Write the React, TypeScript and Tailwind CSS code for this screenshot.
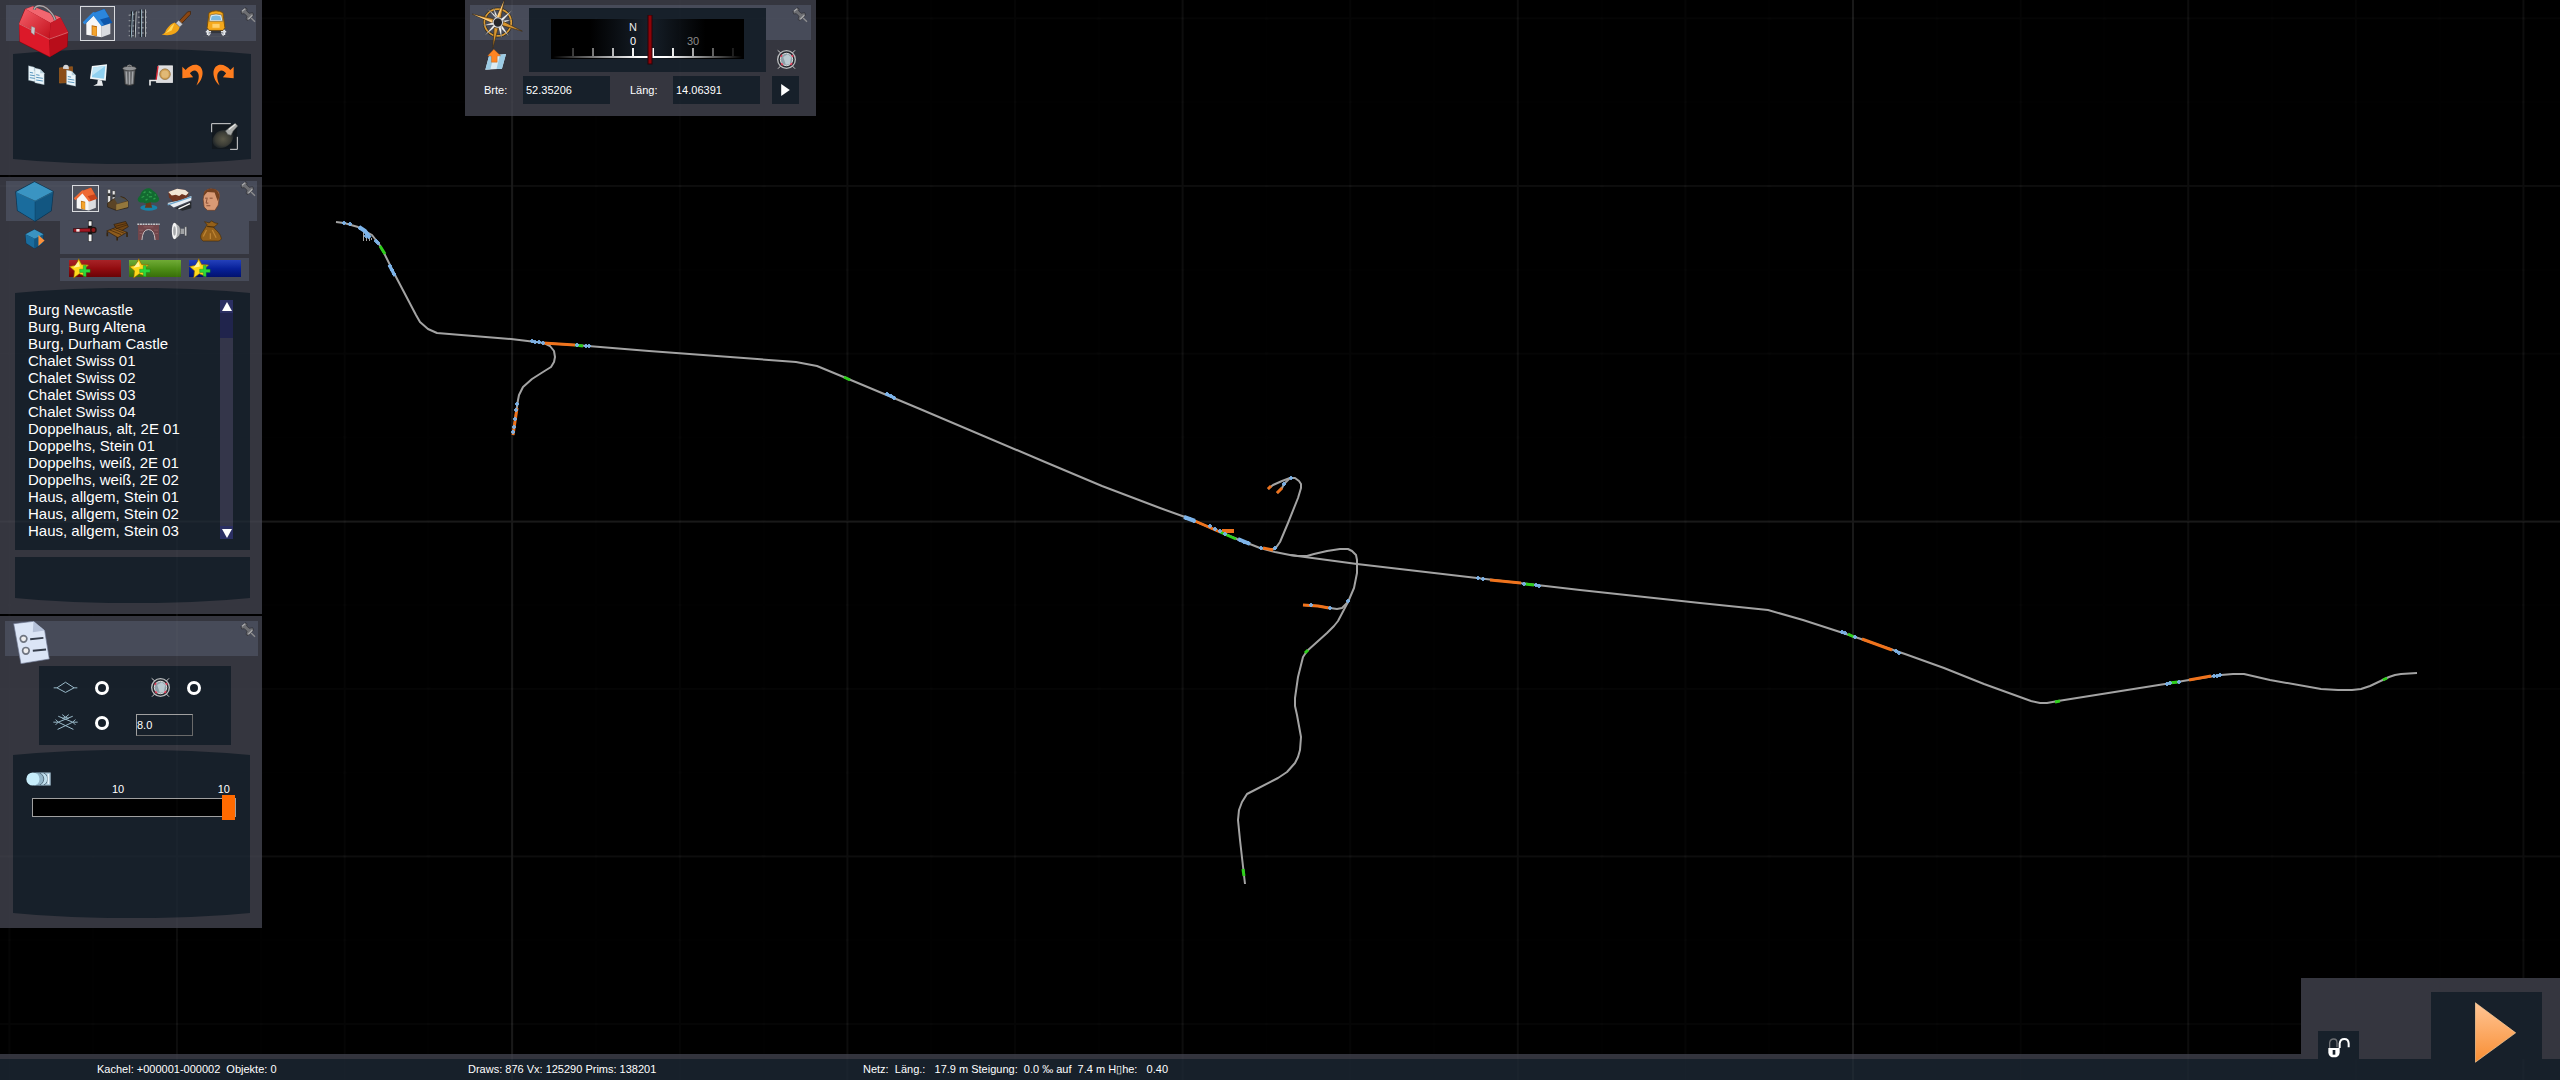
import type { ReactNode } from "react"

const GREY = "#a3a3a3"
const BLUE = "#7db4ea"
const ORANGE = "#f0731c"
const GREEN = "#2fd01c"

const objects = [
  "Burg Newcastle",
  "Burg, Burg Altena",
  "Burg, Durham Castle",
  "Chalet Swiss 01",
  "Chalet Swiss 02",
  "Chalet Swiss 03",
  "Chalet Swiss 04",
  "Doppelhaus, alt, 2E 01",
  "Doppelhs, Stein 01",
  "Doppelhs, weiß, 2E 01",
  "Doppelhs, weiß, 2E 02",
  "Haus, allgem, Stein 01",
  "Haus, allgem, Stein 02",
  "Haus, allgem, Stein 03",
]

const tracks = [
  // main line, west to east
  "336,222 344,223 358,227 372,235 379,244 384,253 395,275 416,315 420,322 428,329 437,333 511,339 544,343 588,346 649,351 796,362 817,366 846,378 920,409 1045,462 1102,486 1160,508 1185,517 1237,539 1260,548 1275,552 1290,555 1357,564 1477,578 1580,590 1700,603 1768,610 1803,620 1840,632 1861,639 1905,654 1944,668 1984,684 2031,701 2040,703 2047,703 2058,701 2165,684 2189,680 2221,675 2233,674 2244,674 2270,680 2321,689 2338,690 2352,690 2361,689 2370,686 2389,677 2395,675 2401,674 2417,673",
  "544,343 550,346 554,351 555,357 554,362 551,367 543,372 532,379 523,387 519,395 518,400 517,407 513,435",
  "1265,549 1275,549 1280,542 1288,523 1298,498 1301,488 1301,484 1299,481 1295,478 1290,478 1282,481 1273,485 1268,489",
  "1290,478 1284,484 1282,488 1277,493",
  "1290,555 1298,556 1307,556 1314,554 1327,551 1340,549 1348,549 1352,551 1356,555 1357,560 1357,573 1354,588 1348,602 1338,621 1334,626 1327,633 1307,651 1303,657 1298,677 1295,698 1295,706 1297,715 1301,737 1300,750 1298,757 1295,763 1287,772 1278,778 1247,794 1242,802 1239,810 1238,820 1240,840 1245,884",
  "1348,602 1342,608 1337,609 1330,608 1318,606 1303,605",
]

const sections: [string, string, number][] = [
  ["380,246 385,254", GREEN, 3],
  ["359,227 365,231 370,238", BLUE, 4],
  ["389,265 395,276", BLUE, 3],
  ["543,343 575,345", ORANGE, 3],
  ["575,345 583,346", GREEN, 3],
  ["517,408 513,435", ORANGE, 3],
  ["844,377 850,380", GREEN, 3],
  ["886,394 895,398", BLUE, 3],
  ["1184,517 1195,521", BLUE, 4],
  ["1195,521 1220,532", ORANGE, 3],
  ["1222,531 1234,531", ORANGE, 4],
  ["1220,532 1236,539", GREEN, 3],
  ["1238,539 1250,544", BLUE, 4],
  ["1263,548 1273,550", ORANGE, 3],
  ["1268,489 1271,486", ORANGE, 3],
  ["1277,493 1282,488", ORANGE, 3],
  ["1303,605 1318,606 1329,608", ORANGE, 3],
  ["1305,653 1308,650", GREEN, 3],
  ["1243,869 1244,876", GREEN, 3],
  ["1490,580 1521,583", ORANGE, 3],
  ["1525,584 1534,585", GREEN, 3],
  ["1848,634 1854,637", GREEN, 3],
  ["1862,639 1892,650", ORANGE, 3],
  ["2055,702 2060,701", GREEN, 3],
  ["2169,683 2178,682", GREEN, 3],
  ["2189,680 2211,676", ORANGE, 3],
  ["2383,680 2387,678", GREEN, 3],
]

const switches: [number, number][] = [
  [344, 223], [350, 224], [360, 228], [366, 236], [376, 241], [378, 243], [390, 266], [392, 270], [394, 274],
  [532, 341], [535, 342], [539, 342], [543, 343], [577, 345], [586, 346], [589, 346],
  [517, 404], [516, 410], [515, 419], [514, 427], [513, 432],
  [887, 394], [891, 396], [894, 398], [1186, 518], [1190, 519], [1194, 521], [1210, 526], [1215, 529],
  [1220, 531], [1225, 534], [1240, 540], [1244, 542], [1248, 543], [1261, 548], [1275, 548],
  [1291, 478], [1284, 484], [1348, 601], [1330, 608], [1311, 605],
  [1478, 578], [1483, 579], [1524, 584], [1536, 585], [1539, 586],
  [1842, 632], [1845, 633], [1855, 637], [1896, 651], [1899, 653],
  [2167, 684], [2170, 683], [2179, 682], [2214, 676], [2217, 676], [2220, 675],
]

const GridLayer = ({ id, className = "" }: { id: string; className?: string }) => (
  <svg className={`pointer-events-none absolute inset-0 h-full w-full ${className}`} aria-hidden="true">
    <defs>
      <pattern id={id} x="176" y="185" width="335.2" height="335.2" patternUnits="userSpaceOnUse">
        <g fill="#ffffff">
          <path d="M0 0h2v335.2h-2zM0 0h335.2v2h-335.2z" opacity=".055" />
          <path d="M167.6 0h2v335.2h-2zM0 167.6h335.2v2h-335.2z" opacity=".022" />
          <path d="M83.8 0h2v335.2h-2zM251.4 0h2v335.2h-2zM0 83.8h335.2v2h-335.2zM0 251.4h335.2v2h-335.2z" opacity=".009" />
        </g>
      </pattern>
      {/* every fourth line is stronger */}
      <pattern id={`${id}-tile`} x="511" y="521" width="1341" height="1341" patternUnits="userSpaceOnUse">
        <path d="M0 0h2v1341h-2zM0 0h1341v2h-1341z" fill="#ffffff" opacity=".05" />
      </pattern>
    </defs>
    <rect width="100%" height="100%" fill={`url(#${id})`} />
    <rect width="100%" height="100%" fill={`url(#${id}-tile)`} />
  </svg>
)

const RouteMap = () => (
  <svg className="absolute inset-0 h-full w-full" aria-label="Strecke" role="img">
    <g fill="none" strokeLinejoin="round">
      {tracks.map((points) => (
        <polyline key={points} points={points} stroke={GREY} strokeWidth="2" />
      ))}
      <path d="M363.5 231v10M366.5 234v7M369.5 236v5M371.5 238v2" stroke={GREY} strokeWidth="1" />
      {sections.map(([points, color, width]) => (
        <polyline key={points} points={points} stroke={color} strokeWidth={width} />
      ))}
    </g>
    {switches.map(([x, y]) => (
      <path key={`${x}-${y}`} d={`M${x - 2} ${y}h4M${x} ${y - 2}v4`} stroke={BLUE} strokeWidth="2" opacity=".9" />
    ))}
  </svg>
)

type IconProps = { box: string; className: string; children: ReactNode }

const Icon = ({ box, className, children }: IconProps) => (
  <svg viewBox={box} className={`block shrink-0 ${className}`} aria-hidden="true">{children}</svg>
)

const IconButton = ({ label, className = "", children }: { label: string; className?: string; children: ReactNode }) => (
  <button type="button" aria-label={label} className={`flex items-center justify-center ${className}`}>{children}</button>
)

const Pin = () => (
  <IconButton label="Anheften" className="h-4 w-4">
    <Icon box="0 0 48 48" className="h-4 w-4">
      <path d="M28 28l17 16" stroke="#8d8d8f" strokeWidth="4" />
      <path d="M3 14L15 2l6 3-1 7 8 7 10-2 3 7-17 17-6-4 3-9-8-8-8 1z" fill="#6d6e72" stroke="#2a2b30" strokeWidth="2" />
      <path d="M6 13l9-8M25 37l12-12" stroke="#a9a9ab" strokeWidth="4" />
    </Icon>
  </IconButton>
)

const Toolbox = () => (
  <Icon box="0 0 156 160" className="h-[53px] w-[52px]">
    <defs>
      <linearGradient id="red" x2="1" y2="1"><stop stopColor="#f5606a" /><stop offset="1" stopColor="#c3101c" /></linearGradient>
    </defs>
    <path d="M3 54L20 12 44 4l84 34 23 44-2 44-54 32L4 112z" fill="#8f0610" />
    <path d="M22 12L44 4l84 34-30 16z" fill="#f26670" />
    <path d="M22 12l76 42-4 48L3 56z" fill="url(#red)" />
    <path d="M3 58l91 46 2 52L5 110z" fill="#dc1929" />
    <path d="M98 54l30-16 23 44-57 20z" fill="#c91a28" />
    <path d="M96 104l54-20-3 42-51 30z" fill="#b80d1a" />
    <path d="M3 57l91 46 56-20" fill="none" stroke="#f98a8f" strokeWidth="2" />
    <path d="M40 64l11 5-2 22-10-8z" fill="#c5c5c9" stroke="#666" />
    <path d="M48 14C52-2 74 0 86 10s22 20 26 36" fill="none" stroke="#5b4347" strokeWidth="8" />
    <path d="M48 14C52-2 74 0 86 10s22 20 26 36" fill="none" stroke="#a6aaae" strokeWidth="4" />
  </Icon>
)

const House = ({ roof, shade, className }: { roof: string; shade: string; className: string }) => (
  <Icon box="0 0 90 90" className={className}>
    <path d="M10 44L32 22l24 28v38l-46-8z" fill="#f6f6f6" />
    <path d="M56 50l26-6v34l-26 10z" fill="#dadce0" />
    <path d="M26 52l16 3v30l-16-4z" fill="#b5660c" />
    <path d="M28 55l13 3v26l-13-4z" fill="#f3a32c" />
    <path d="M32 14L64 2l24 42-30 10z" fill={shade} />
    <path d="M34 14L64 3l14 24-32 9z" fill={roof} />
    <path d="M2 46L32 17l27 35" fill="none" stroke={roof} strokeWidth="9" strokeLinejoin="round" />
  </Icon>
)

const Rails = () => (
  <Icon box="0 0 58 86" className="h-[29px] w-[19px]">
    <path d="M2 18l20-4M2 34h20M2 50h20M2 66h20M2 80h20M30 8h27M30 24h27M30 40h27M30 56h27M30 72h27" stroke="#8b8f95" strokeWidth="4" />
    <path d="M12 6L9 86M23 4l-2 82M39 0v84M51 0v84" stroke="#12171d" strokeWidth="6" />
    <path d="M14 6l-4 80M41 0v84" stroke="#9fb9c6" strokeWidth="3" />
    <path d="M25 6l-3 80M53 0v84" stroke="#c9cdd1" strokeWidth="3" />
  </Icon>
)

const Brush = () => (
  <Icon box="0 0 90 74" className="h-[25px] w-[30px]">
    <path d="M50 34L80 2l9-1-1 9-30 31z" fill="#8a4612" stroke="#3c2008" strokeWidth="2" />
    <path d="M44 36l9-9 12 12-9 9z" fill="#c6c9ce" stroke="#55585e" strokeWidth="2" />
    <path d="M41 34l15 14c-5 20-28 28-54 22 13-3 10-12 17-19 6-7 12-14 22-17z" fill="#f2a516" />
    <path d="M40 38C28 44 24 60 10 68l22-10z" fill="#ffd75a" />
  </Icon>
)

const Train = () => (
  <Icon box="0 0 78 82" className="h-[27px] w-[26px]">
    <path d="M0 80h78" stroke="#55585f" strokeWidth="2" />
    <path d="M18 8Q39-3 60 8l6 46-6 8H18l-6-8z" fill="#f5a81b" stroke="#7b4e06" strokeWidth="3" />
    <path d="M22 15q17-6 34 0l4 19H18z" fill="#dff0f8" stroke="#76592a" strokeWidth="2" />
    <path d="M26 19q13-4 26 0l3 11H23z" fill="#7cb9df" />
    <path d="M28 42h22v12H28z" fill="#ffd06b" />
    <path d="M16 63h46v7H16z" fill="#33353b" />
    <path d="M14 60v16M64 60v16" stroke="#e9ecef" strokeWidth="6" />
    <path d="M8 66h16M54 66h16M22 70l-6 8M56 70l6 8" stroke="#dcdfe3" strokeWidth="4" />
  </Icon>
)

const Page = ({ x, y }: { x: number; y: number }) => (
  <g transform={`translate(${x} ${y})`}>
    <path d="M0 2l16 4 12 12v34L0 46z" fill="#eaf5fa" stroke="#7e97a5" strokeWidth="1" />
    <path d="M16 6v12h12z" fill="#b6cfdb" />
    <path d="M4 22l10 2M4 30l20 3M4 38l20 3" stroke="#5a97be" strokeWidth="3" />
  </g>
)

const editTools = [
  { label: "Kopieren", icon: <Icon box="0 0 50 60" className="h-5 w-[17px]"><Page x={1} y={0} /><Page x={20} y={7} /></Icon> },
  { label: "Einfügen", icon: (
    <Icon box="0 0 52 70" className="h-[23px] w-[17px]">
      <path d="M1 12l40-4v48l-40 2z" fill="#8b4d18" stroke="#a9651f" strokeWidth="2" />
      <path d="M12 14Q12 2 21 2t9 10v4z" fill="#d4d4d6" />
      <Page x={23} y={16} />
    </Icon>) },
  { label: "Ansicht", icon: (
    <Icon box="0 0 56 70" className="h-[23px] w-[19px]">
      <path d="M26 48l12 2 4 16H12l12-6z" fill="#e8eaec" />
      <path d="M8 6L54 1l-4 50-48-6z" fill="#f0f6f9" />
      <path d="M12 11l37-5-4 39-37-5z" fill="#8fd0f0" />
      <path d="M12 11l37-5-39 28z" fill="#c0e6f7" />
    </Icon>) },
  { label: "Löschen", icon: (
    <Icon box="0 0 46 66" className="h-[22px] w-[15px]">
      <path d="M5 16h36l-4 46q-14 6-28 0z" fill="#66686b" stroke="#222" strokeWidth="2" />
      <path d="M13 22l2 38M23 22v40M33 22l-2 38" stroke="#a3a5a8" strokeWidth="4" />
      <ellipse cx="23" cy="13" rx="21" ry="7" fill="#919396" stroke="#333" strokeWidth="2" />
      <path d="M16 7q7-8 14 0" fill="none" stroke="#888" strokeWidth="4" />
    </Icon>) },
  { label: "Messen", icon: (
    <Icon box="0 0 72 62" className="h-[21px] w-6">
      <path d="M28 2h43v50H22z" fill="#dcdcde" stroke="#f7f7f7" strokeWidth="2" />
      <path d="M27 3l-6 44" stroke="#d6202f" strokeWidth="4" />
      <circle cx="48" cy="27" r="16" fill="#d2a052" stroke="#8a6a3a" strokeWidth="2" />
      <circle cx="48" cy="27" r="11" fill="#e1b976" />
      <path d="M26 46H3v15" fill="none" stroke="#e6e6e6" strokeWidth="5" />
    </Icon>) },
  { label: "Rückgängig", icon: (
    <Icon box="0 0 64 66" className="h-[22px] w-[21px]">
      <path d="M1 8l10 10C24 2 44-4 56 8c14 16 4 44-12 57 8-18 10-34 2-42-7-7-15-3-22 5l10 12-33 3z" fill="#ff7d1e" />
    </Icon>) },
  { label: "Wiederholen", icon: (
    <Icon box="0 0 64 66" className="h-[22px] w-[21px]">
      <path d="M63 8L53 18C40 2 20-4 8 8c-14 16-4 44 12 57-8-18-10-34-2-42 7-7 15-3 22 5L30 40l33 3z" fill="#ff7d1e" />
    </Icon>) },
]

const Torch = () => (
  <Icon box="0 0 82 82" className="h-[27px] w-[27px]">
    <defs>
      <radialGradient id="glow"><stop stopColor="#5a5848" /><stop offset=".7" stopColor="#3c3d36" /><stop offset="1" stopColor="#23282a" /></radialGradient>
    </defs>
    <rect x="3" y="3" width="76" height="76" fill="#0f1418" opacity=".6" />
    <path d="M48 22c-20-4-36 8-42 24-6 22 16 36 36 28 18-8 26-20 26-38z" fill="url(#glow)" />
    <path d="M44 24l12-10L74 1l7 8-14 16-6 12-10-2z" fill="#a9aba9" stroke="#5d605f" strokeWidth="2" />
    <path d="M54 20l20-16" stroke="#e6e7e6" strokeWidth="4" />
    <path d="M2 28V2h58M80 42v38H58" fill="none" stroke="#d8d8d8" strokeWidth="3" />
  </Icon>
)

const Cube = ({ className }: { className: string }) => (
  <Icon box="0 0 118 124" className={className}>
    <path d="M59 1l58 30-6 60-50 32L6 90 1 32z" fill="#0a3350" />
    <path d="M59 3l56 29-54 28L3 33z" fill="#3a94c2" />
    <path d="M3 34l57 27v60L8 89z" fill="#1a6c9d" />
    <path d="M115 34L61 61v60l48-31z" fill="#125681" />
    <path d="M4 34l57 27 53-27" fill="none" stroke="#5aaad0" strokeWidth="1" />
  </Icon>
)

const categories = [
  { label: "Industrie", icon: (
    <Icon box="0 0 68 70" className="h-[23px] w-[23px]">
      <path d="M4 4h9v44H4zM18 8h9v34h-9z" fill="#e8e8e8" stroke="#333" strokeWidth="2" />
      <path d="M4 16h9v8H4zM18 20h9v8h-9z" fill="#333" />
      <path d="M4 46l20-14 14 2 6-8 12 4 10 10v20l-36 8L4 58z" fill="#5b4426" stroke="#2b1e0e" strokeWidth="2" />
      <path d="M30 50l36-10v18l-36 10z" fill="#94773c" />
      <path d="M24 32l16-6 24 12-30 10z" fill="#4b4f54" />
    </Icon>) },
  { label: "Vegetation", icon: (
    <Icon box="0 0 70 70" className="h-[23px] w-[23px]">
      <ellipse cx="36" cy="60" rx="26" ry="9" fill="#1782a8" />
      <path d="M31 34h9l6 26H24z" fill="#643a18" />
      <path d="M34 1c10 0 12 6 18 10s10 8 12 16c6 6 4 14-4 16-8 4-14-2-22 1s-14 4-18 0c-10 2-18-2-18-10 2-6 4-8 8-12C12 12 22 2 34 1z" fill="#126a30" />
      <path d="M20 15l6-4M36 11l8 5M14 29l8-4M36 27l10-1M50 34l6-3M26 37l6-3M30 20l4 2M54 20l3 3" stroke="#2f9c4c" strokeWidth="4" />
    </Icon>) },
  { label: "Gelände", icon: (
    <Icon box="0 0 74 68" className="h-[23px] w-[25px]">
      <path d="M4 12L30 2l24 4 10 8-6 20-40 6L6 28z" fill="#6f3521" />
      <path d="M4 12L30 2l24 4 10 8-8 8-12-4-8 6-10-4-12 2z" fill="#f1e6d6" />
      <path d="M1 44l40-8 31-12v12L20 58z" fill="#e8edf2" />
      <path d="M2 50l70-24" stroke="#6aa3c9" strokeWidth="4" />
      <path d="M24 60l48-20v20l-26 7z" fill="#25282c" />
      <path d="M34 62l34-16" stroke="#f4f4f4" strokeWidth="4" />
    </Icon>) },
  { label: "Figuren", icon: (
    <Icon box="0 0 54 70" className="h-[23px] w-[18px]">
      <path d="M8 10Q20-2 38 4t14 24l-3 24-10 16H16L6 58 3 34z" fill="#d99a75" stroke="#6e3c22" strokeWidth="2" />
      <path d="M5 24Q5 2 28 2q24-1 24 26l-4 12-5-12-5-14-22-2z" fill="#74401f" />
      <path d="M9 31h8M23 31h9M15 33l-3 13h7M13 54h12" fill="none" stroke="#8a4f36" strokeWidth="3" />
    </Icon>) },
  { label: "Signale", icon: (
    <Icon box="0 0 76 66" className="h-[22px] w-[25px]">
      <path d="M52 1v64" stroke="#111" strokeWidth="13" />
      <path d="M52 3v14M52 44v20" stroke="#f3f3f3" strokeWidth="9" />
      <path d="M1 26l64-2v12H1z" fill="#a21722" stroke="#2c0b0e" strokeWidth="2" />
      <path d="M10 27h10v8H10z" fill="#f1e9e9" />
      <circle cx="62" cy="30" r="10" fill="#23130f" />
      <circle cx="62" cy="30" r="6" fill="#8e1719" />
    </Icon>) },
  { label: "Ausstattung", icon: (
    <Icon box="0 0 70 60" className="h-5 w-[23px]">
      <path d="M24 10L60 1l8 16-30 18z" fill="#704515" stroke="#2f1b06" strokeWidth="2" />
      <path d="M2 30l26-10 36 14-28 16z" fill="#8d5b1c" stroke="#2f1b06" strokeWidth="2" />
      <path d="M12 27l34 14M20 23l36 14M27 16l36-9M30 23l36-12" stroke="#382007" strokeWidth="2" />
      <path d="M4 34v12M34 48v11M64 34v14" stroke="#37250f" strokeWidth="5" />
    </Icon>) },
  { label: "Brücken", icon: (
    <Icon box="0 0 70 56" className="h-[19px] w-[23px]">
      <path d="M3 8h64v46H55Q52 22 35 22T14 54H3z" fill="#71464b" />
      <path d="M6 24h12M8 34h8M52 24h12M56 34h8M20 14h30" stroke="#8b5d62" strokeWidth="3" />
      <path d="M15 54Q17 22 35 22t20 32" fill="none" stroke="#c9c0c0" strokeWidth="3" />
      <path d="M1 6h68" stroke="#c9c9cb" strokeWidth="5" strokeDasharray="6 2" />
    </Icon>) },
  { label: "Geräusche", icon: (
    <Icon box="0 0 50 54" className="h-[18px] w-[17px]">
      <path d="M24 20h20v16H24z" fill="#9fa1a4" />
      <path d="M40 14h7v28h-7z" fill="#c3c4c7" stroke="#404247" strokeWidth="2" />
      <path d="M10 2c16 8 18 14 18 26S22 46 10 52z" fill="#aeb0b3" stroke="#44474b" strokeWidth="2" />
      <ellipse cx="10" cy="27" rx="8" ry="25" fill="#f3f3f3" />
      <ellipse cx="10" cy="27" rx="4" ry="14" fill="#a7a9ac" />
    </Icon>) },
  { label: "Fracht", icon: (
    <Icon box="0 0 68 66" className="h-[22px] w-[22px]">
      <path d="M22 14L14 4l14 4 8-6 10 6 10 2-14 12c10 10 22 20 24 34-4 10-12 8-20 8H10C0 58 0 46 8 36c4-8 10-14 14-22z" fill="#94601a" stroke="#462c08" strokeWidth="2" />
      <path d="M22 19l22 2" stroke="#4f320c" strokeWidth="4" />
      <path d="M20 30L10 50M38 30l12 24M32 40v18" stroke="#bd8433" strokeWidth="4" />
    </Icon>) },
]

const swatches = [
  { label: "Favoriten rot", bar: "from-[#a82227] via-[#930c10] to-[#6a0306]" },
  { label: "Favoriten grün", bar: "from-[#70ab35] via-[#4f8f17] to-[#386f09]" },
  { label: "Favoriten blau", bar: "from-[#2440bb] via-[#08219a] to-[#02126f]" },
]

const Star = () => (
  <Icon box="0 0 66 64" className="h-[21px] w-[22px]">
    <path d="M29 2l9 18 21 1-15 15 7 20-20-8-17 13 2-22L1 26l20-4z" fill="#ffd91c" stroke="#8c6404" strokeWidth="2" />
    <path d="M28 10l5 16-20 4z" fill="#fff49a" />
    <path d="M43 23h9v11h12v10H52v12h-9V44H32V34h11z" fill="#2cd83a" stroke="#0e6b18" strokeWidth="1" />
  </Icon>
)

const DocumentIcon = () => (
  <Icon box="0 0 112 130" className="h-[43px] w-[37px]">
    <path d="M2 8L62 1l34 28 14 86-86 14z" fill="#dbe5f6" stroke="#6d7690" strokeWidth="2" />
    <path d="M62 1l-2 33 36-5z" fill="#b5c1d8" />
    <circle cx="32" cy="54" r="10" fill="#eee" stroke="#6f7580" strokeWidth="5" />
    <circle cx="39" cy="90" r="10" fill="#eee" stroke="#6f7580" strokeWidth="5" />
    <path d="M52 55l40-4M60 90l40-4" stroke="#363e4c" strokeWidth="6" />
  </Icon>
)

const Target = () => (
  <Icon box="0 0 64 64" className="h-[21px] w-[21px]">
    <path d="M5 4l12 10M58 4L48 14M6 60l10-10M58 60L48 50" stroke="#c9c9c9" strokeWidth="3" />
    <circle cx="32" cy="32" r="27" fill="#24272d" stroke="#b9bbbd" strokeWidth="4" />
    <circle cx="32" cy="32" r="19" fill="#8ea0a9" stroke="#dcdcdc" strokeWidth="3" />
    <path d="M22 24l14-8 10 8-4 22-12 2z" fill="#bac9d0" />
    <path d="M15 24l3-6M48 18l4 6M16 44l5 5M44 49l5-6" stroke="#e0405c" strokeWidth="5" />
  </Icon>
)

const Diamond = ({ crossed }: { crossed?: boolean }) => (
  <Icon box="0 0 76 50" className="h-[17px] w-[25px]">
    {crossed ? (
      <path d="M1 24h14M61 24h14M8 16l8 8-8 8M68 16l-8 8 8 8M16 24l44-18M16 6l44 18M16 24l46 22M60 24L14 46M28 1l10 8 10-8M28 13l10-4 10 4" fill="none" stroke="#9bbccb" strokeWidth="3" />
    ) : (
      <path d="M2 26h10L38 9l26 17h10M12 26l26 14 26-14" fill="none" stroke="#9bbccb" strokeWidth="3" />
    )}
  </Icon>
)

const Tokens = () => (
  <Icon box="0 0 76 42" className="h-[14px] w-[25px]">
    <path d="M40 1h35v40H40z" fill="#a9c5d6" />
    <circle cx="46" cy="21" r="20" fill="#c1e0ee" stroke="#587080" strokeWidth="3" />
    <circle cx="34" cy="21" r="20" fill="#93b5c8" stroke="#587080" strokeWidth="3" />
    <circle cx="21" cy="21" r="20" fill="#c7edfb" />
    <path d="M68 6v30" stroke="#e8f5fb" strokeWidth="5" />
  </Icon>
)

const Compass = () => (
  <Icon box="0 0 152 146" className="h-[49px] w-[51px]">
    <circle cx="77" cy="67" r="40" fill="none" stroke="#2c2820" strokeWidth="9" />
    <circle cx="77" cy="67" r="40" fill="none" stroke="#d99b35" strokeWidth="5" />
    <path d="M46 26l28 32 6-4zM120 30L84 58l6 6zM110 108L88 72l-8 6zM38 106l34-28-6-6zM64 22l6 34 8-4zM118 58l-30 4 2 8zM88 114l0-36-10 2zM32 76l34-2-2-8z" fill="#f1f1f1" stroke="#3a3a3a" strokeWidth="1" />
    <path d="M96 1L86 54l-12-4zM150 93L90 76l4-12zM62 144l4-62 12 2zM1 42l63 14-4 12z" fill="#d9962f" stroke="#3b2a14" strokeWidth="2" />
    <path d="M96 1L80 52l-6-2zM1 42l61 20-2 6z" fill="#ffd084" />
    <circle cx="77" cy="67" r="14" fill="#25262b" stroke="#d9d9d9" strokeWidth="3" />
  </Icon>
)

const MapUp = () => (
  <Icon box="0 0 62 62" className="h-[21px] w-[21px]">
    <path d="M12 20l50-5-12 43-49 3z" fill="#dcebf3" />
    <path d="M12 20l14-2-10 42-15 1zM44 17l18-2-12 43-16 1z" fill="#9ccbe4" />
    <path d="M26 1l20 19-10 1v18H19V21L8 20z" fill="#ff8523" stroke="#a7500d" strokeWidth="1" />
  </Icon>
)

const bowed = "[clip-path:polygon(0_5px,10%_3px,25%_1px,40%_0,60%_0,75%_1px,90%_3px,100%_5px,100%_calc(100%-5px),90%_calc(100%-3px),75%_calc(100%-1px),60%_100%,40%_100%,25%_calc(100%-1px),10%_calc(100%-3px),0_calc(100%-5px))]"
const bowedTop = "[clip-path:polygon(0_5px,10%_3px,25%_1px,40%_0,60%_0,75%_1px,90%_3px,100%_5px,100%_100%,0_100%)]"
const bowedBottom = "[clip-path:polygon(0_0,100%_0,100%_calc(100%-5px),90%_calc(100%-3px),75%_calc(100%-1px),60%_100%,40%_100%,25%_calc(100%-1px),10%_calc(100%-3px),0_calc(100%-5px))]"

const ToolsPanel = () => (
  <section className="h-[175px] bg-[#35363f] px-[6px] pt-[5px]">
    <header className="flex h-9 items-center bg-[#474b59] pl-3">
      <div className="relative z-10 mt-4"><Toolbox /></div>
      <nav className="ml-[10px] flex items-center">
        <IconButton label="Objekte" className="h-[35px] w-[35px] border border-[#d8dade] bg-[#50535e]">
          <House roof="#2b86dc" shade="#0d56ab" className="h-[30px] w-[30px]" />
        </IconButton>
        <IconButton label="Gleise" className="w-11"><Rails /></IconButton>
        <IconButton label="Landschaft" className="w-[34px]"><Brush /></IconButton>
        <IconButton label="Züge" className="w-[46px]"><Train /></IconButton>
      </nav>
      <div className="mb-4 ml-auto"><Pin /></div>
    </header>
    <div className={`mt-2 mr-[5px] ml-[7px] flex h-[115px] flex-col justify-between bg-[#17202a] py-[14px] ${bowed}`}>
      <div className="mr-3 ml-2 grid grid-cols-7">
        {editTools.map(({ label, icon }) => (
          <IconButton key={label} label={label} className="h-6">{icon}</IconButton>
        ))}
      </div>
      <IconButton label="Taschenlampe" className="mr-[13px] self-end"><Torch /></IconButton>
    </div>
  </section>
)

const ScrollArrow = ({ down }: { down?: boolean }) => (
  <button type="button" aria-label={down ? "Nach unten" : "Nach oben"} className="flex h-[13px] items-center justify-center bg-[#2b2f63]">
    <Icon box="0 0 10 10" className="h-[10px] w-[10px]">
      <path d={down ? "M0 1h10L5 10z" : "M0 9h10L5 0z"} fill="#ffffff" />
    </Icon>
  </button>
)

const BrowserPanel = () => (
  <section className="flex h-[437px] flex-col bg-[#35363f] pt-1 pr-[5px] pl-[6px]">
    <header className="flex bg-[linear-gradient(#474b59_40px,transparent_40px)]">
      <div className="flex w-[54px] flex-col items-center gap-[7px] pl-[2px]">
        <Cube className="h-[41px] w-[39px]" />
        <IconButton label="Nächste" className="relative">
          <Cube className="h-5 w-[19px]" />
          <span className="absolute top-[6px] left-[13px]">
            <Icon box="0 0 18 32" className="h-[11px] w-[7px]"><path d="M0 0l18 16L0 32z" fill="#f9913c" /></Icon>
          </span>
        </IconButton>
      </div>
      <div className="grid h-[73px] w-[189px] grid-cols-5 content-start gap-y-1 bg-[#474b59] pt-1 pr-[22px] pl-[10px]">
        <div className="flex justify-center">
          <IconButton label="Gebäude" className="h-[27px] w-[27px] border border-[#d8dade] bg-[#50535e]">
            <House roof="#ef6a34" shade="#c8431a" className="h-6 w-6" />
          </IconButton>
        </div>
        {categories.map(({ label, icon }) => (
          <IconButton key={label} label={label} className="h-7">{icon}</IconButton>
        ))}
      </div>
      <div className="-ml-[9px]"><Pin /></div>
    </header>
    <div className="mt-1 ml-[54px] flex h-[23px] w-[189px] items-center bg-[#474b59] pb-[2px] pl-[9px]">
      {swatches.map(({ label, bar }) => (
        <button key={label} type="button" aria-label={label} className="flex w-[60px] items-center">
          <span className={`flex h-[17px] w-[52px] items-center bg-linear-to-b ${bar}`}><Star /></span>
        </button>
      ))}
    </div>
    <div className={`mt-[7px] mr-[7px] ml-[9px] flex h-[262px] justify-between bg-[#17202a] pt-3 pr-[17px] pb-[11px] pl-[13px] ${bowedTop}`}>
      <ul className="pt-px text-[15px] leading-[17px] text-white">
        {objects.map((name) => (
          <li key={name}>{name}</li>
        ))}
      </ul>
      <div className="flex w-[13px] flex-col justify-between bg-[#34364a]">
        <div className="flex flex-col">
          <ScrollArrow />
          <span className="h-[25px] bg-[#20244c]" />
        </div>
        <ScrollArrow down />
      </div>
    </div>
    <div className={`mt-[7px] mr-[7px] ml-[9px] h-[46px] bg-[#17202a] ${bowedBottom}`} />
  </section>
)

const radio = "h-[14px] w-[14px] appearance-none rounded-full border-[3px] border-white bg-transparent"

const OptionsPanel = () => (
  <section className="h-[312px] bg-[#35363f] pt-[5px] pr-1 pl-[5px]">
    <header className="flex h-[35px] justify-between bg-[#474b59] pr-[2px] pl-2">
      <DocumentIcon />
      <div className="mt-px"><Pin /></div>
    </header>
    <div className="mt-[10px] ml-[34px] grid h-[79px] w-48 grid-cols-[60px_51px_80px] grid-rows-[35px_35px] items-center bg-[#17202a] pt-1">
      <div className="flex items-center pl-[14px]"><Diamond /></div>
      <input type="radio" name="mode" aria-label="Einzeln" className={`-ml-1 ${radio}`} />
      <div className="flex items-center gap-4">
        <Target />
        <input type="radio" name="mode" aria-label="Rotation" className={radio} />
      </div>
      <div className="flex items-center pl-[14px]"><Diamond crossed /></div>
      <input type="radio" name="mode" aria-label="Kreuzung" className={`-ml-1 ${radio}`} />
      <input aria-label="Abstand" defaultValue="8.0" className="mt-[5px] -ml-[14px] h-[22px] w-[57px] border border-[#a0a0a0] border-r-[#6a6a6a] border-b-[#6a6a6a] bg-transparent text-[11px] text-white" />
    </div>
    <div className={`mt-[5px] mr-2 ml-2 h-[168px] bg-[#17202a] px-[13px] pt-[22px] ${bowed}`}>
      <Tokens />
      <div className="-mt-[3px] flex justify-between pr-[7px] pl-[86px] text-[11px] leading-[12px] text-white">
        <span>10</span>
        <span>10</span>
      </div>
      <input
        type="range"
        aria-label="Anzahl"
        min="0"
        max="10"
        defaultValue="10"
        className="ml-[6px] block h-[25px] w-[204px] appearance-none bg-transparent [&::-webkit-slider-runnable-track]:h-[19px] [&::-webkit-slider-runnable-track]:border [&::-webkit-slider-runnable-track]:border-[#a0a0a0] [&::-webkit-slider-runnable-track]:bg-black [&::-webkit-slider-thumb]:-mt-1 [&::-webkit-slider-thumb]:h-[25px] [&::-webkit-slider-thumb]:w-[13px] [&::-webkit-slider-thumb]:appearance-none [&::-webkit-slider-thumb]:bg-[#ff6a00]"
      />
    </div>
  </section>
)

const CompassPanel = () => (
  <section className="h-[116px] w-[351px] bg-[#35363f] px-[5px] pt-[5px] text-[11px] text-white">
    <div className="flex h-[67px] bg-[linear-gradient(#474b59_35px,transparent_35px)]">
      <div className="-mt-[5px] flex w-[59px] flex-col items-center pr-1">
        <Compass />
        <IconButton label="Karte" className="-ml-1"><MapUp /></IconButton>
      </div>
      <div className="mt-[3px] flex h-16 w-[237px] justify-center bg-[#17202a] pt-[7px]">
        <svg className="block h-[50px] w-[193px]" aria-label="Kompass" role="img" fontSize="11" textAnchor="middle">
          <defs>
            <linearGradient id="dial"><stop stopColor="#000" /><stop offset=".2" stopColor="#000" /><stop offset=".5" stopColor="#17202a" /><stop offset=".8" stopColor="#000" /><stop offset="1" stopColor="#000" /></linearGradient>
            <linearGradient id="scale"><stop stopColor="#fff" stopOpacity="0" /><stop offset=".45" stopColor="#fff" /><stop offset=".6" stopColor="#fff" /><stop offset="1" stopColor="#fff" stopOpacity="0" /></linearGradient>
          </defs>
          <rect y="4" width="193" height="40" fill="url(#dial)" />
          <path d="M2 41h189v2H2zM21 33h2v8h-2zM41 33h2v8h-2zM61 33h2v8h-2zM81 33h2v8h-2zM101 33h2v8h-2zM121 33h2v8h-2zM141 33h2v8h-2zM161 33h2v8h-2zM181 33h2v8h-2z" fill="url(#scale)" />
          <rect x="97" y="0" width="4" height="49" fill="#8f0309" stroke="#2c0306" />
          <text x="82" y="16" fill="#e8e8e8">N</text>
          <text x="82" y="30" fill="#ffffff">0</text>
          <text x="142" y="30" fill="#8b8b8b">30</text>
        </svg>
      </div>
      <div className="flex flex-1 flex-col items-center justify-between pt-[2px] pb-[2px]">
        <div className="mr-[3px] self-end"><Pin /></div>
        <IconButton label="Zielpunkt" className="mr-[5px]"><Target /></IconButton>
      </div>
    </div>
    <form className="mt-1 flex h-7 items-center pl-[14px]">
      <label htmlFor="lat" className="w-[39px]">Brte:</label>
      <input id="lat" defaultValue="52.35206" className="h-7 w-[87px] bg-[#17202a] pl-[3px]" />
      <label htmlFor="lng" className="ml-5 w-[43px]">Läng:</label>
      <input id="lng" defaultValue="14.06391" className="h-7 w-[87px] bg-[#17202a] pl-[3px]" />
      <IconButton label="Springen" className="ml-3 h-7 w-[27px] bg-[#17202a]">
        <Icon box="0 0 26 36" className="h-3 w-[9px]"><path d="M0 0l26 18L0 36z" fill="#ffffff" /></Icon>
      </IconButton>
    </form>
  </section>
)

const PlayPanel = () => (
  <section className="flex h-[81px] w-[259px] items-end bg-[#35363f] pl-[17px]">
    <IconButton label="Entsperren" className="h-7 w-[41px] bg-[#17202a] pt-[6px]">
      <Icon box="0 0 66 60" className="h-5 w-[22px]">
        <path d="M5 30V14Q7 3 17 3t10 11v14" fill="none" stroke="#6f7175" strokeWidth="4" />
        <path d="M35 30V16Q37 3 49 3t13 13v12" fill="none" stroke="#fff" strokeWidth="6" />
        <path d="M1 30h34v14Q33 58 18 58T1 44z" fill="#fff" />
        <path d="M18 36v14" stroke="#17202a" strokeWidth="8" />
      </Icon>
    </IconButton>
    <IconButton label="Start" className="ml-[72px] h-[67px] w-[111px] bg-[#17202a]">
      <Icon box="0 0 124 182" className="mt-[14px] ml-[18px] h-[61px] w-[41px]">
        <defs>
          <linearGradient id="play" x2="0" y2="1"><stop stopColor="#ffc595" /><stop offset="1" stopColor="#f98e33" /></linearGradient>
        </defs>
        <path d="M1 1l122 91L1 181z" fill="url(#play)" stroke="#ffd3a0" strokeWidth="2" />
      </Icon>
    </IconButton>
  </section>
)

const StatusBar = () => (
  <footer className="h-[26px] bg-[#17202a] text-[11px] leading-[20px] whitespace-pre text-white">
    <div className="h-[5px] bg-[#33343d]" />
    <div className="flex pl-[97px]">
      <span className="w-[371px]">Kachel: +000001-000002  Objekte: 0</span>
      <span className="w-[395px]">Draws: 876 Vx: 125290 Prims: 138201</span>
      <span>Netz:  Läng.:   17.9 m Steigung:  0.0 ‰ auf  7.4 m H▯he:   0.40</span>
    </div>
  </footer>
)

const App = () => {
  return (
    <main className="relative flex min-h-screen flex-col overflow-hidden bg-black font-['Liberation_Sans',Arial,sans-serif]">
      <GridLayer id="grid" className="opacity-70" />
      <RouteMap />
      <div className="relative flex flex-1 items-start gap-[203px]">
        {/* Left column */}
        <aside className="flex w-[262px] flex-col gap-[2px]">
          <ToolsPanel />
          <BrowserPanel />
          <OptionsPanel />
        </aside>
        <CompassPanel />
        {/* Overlaps the light edge of the status bar */}
        <div className="relative z-10 -mb-[5px] ml-auto self-end"><PlayPanel /></div>
      </div>
      <div className="relative"><StatusBar /></div>
      {/* The grid shines faintly through the panels */}
      <GridLayer id="grid-overlay" className="opacity-30" />
    </main>
  )
}

export default App
